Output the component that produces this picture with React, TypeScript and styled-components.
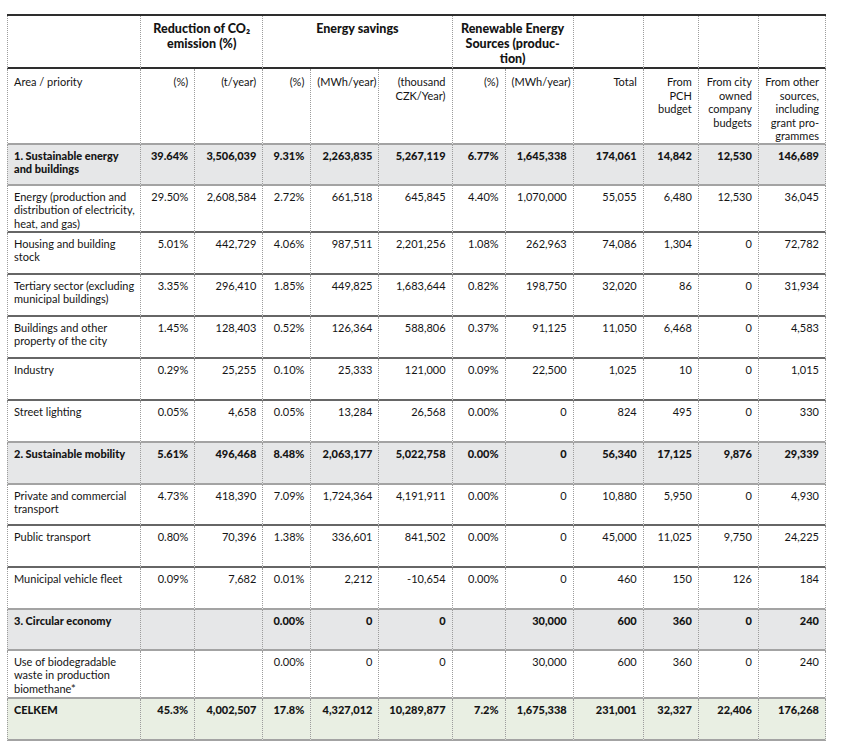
import styled, { createGlobalStyle } from 'styled-components';

const GlobalStyle = createGlobalStyle`
  html, body {
    margin: 0;
    padding: 0;
    background: #ffffff;
  }

  body {
    font-family: Lato, 'Liberation Sans', sans-serif;
    color: #141414;
  }
`;

type Kind = 'item' | 'section' | 'total';

type Row = {
  kind: Kind;
  label: string[];
  values: string[];
  height: number;
};

const colWidths = [133, 54, 68, 48, 68, 73, 53, 68, 70, 55, 60, 68];

const subHeaders: { lines: string[]; align: 'left' | 'right' }[] = [
  { lines: ['Area / priority'], align: 'left' },
  { lines: ['(%)'], align: 'right' },
  { lines: ['(t/year)'], align: 'right' },
  { lines: ['(%)'], align: 'right' },
  { lines: ['(MWh/year)'], align: 'right' },
  { lines: ['(thousand', 'CZK/Year)'], align: 'right' },
  { lines: ['(%)'], align: 'right' },
  { lines: ['(MWh/year)'], align: 'right' },
  { lines: ['Total'], align: 'right' },
  { lines: ['From', 'PCH', 'budget'], align: 'right' },
  { lines: ['From city', 'owned', 'company', 'budgets'], align: 'right' },
  { lines: ['From other', 'sources,', 'including', 'grant pro-', 'grammes'], align: 'right' },
];

const rows: Row[] = [
  {
    kind: 'section',
    label: ['1. Sustainable energy', 'and buildings'],
    values: ['39.64%', '3,506,039', '9.31%', '2,263,835', '5,267,119', '6.77%', '1,645,338', '174,061', '14,842', '12,530', '146,689'],
    height: 41,
  },
  {
    kind: 'item',
    label: ['Energy (production and', 'distribution of electricity,', 'heat, and gas)'],
    values: ['29.50%', '2,608,584', '2.72%', '661,518', '645,845', '4.40%', '1,070,000', '55,055', '6,480', '12,530', '36,045'],
    height: 47,
  },
  {
    kind: 'item',
    label: ['Housing and building', 'stock'],
    values: ['5.01%', '442,729', '4.06%', '987,511', '2,201,256', '1.08%', '262,963', '74,086', '1,304', '0', '72,782'],
    height: 42,
  },
  {
    kind: 'item',
    label: ['Tertiary sector (excluding', 'municipal buildings)'],
    values: ['3.35%', '296,410', '1.85%', '449,825', '1,683,644', '0.82%', '198,750', '32,020', '86', '0', '31,934'],
    height: 42,
  },
  {
    kind: 'item',
    label: ['Buildings and other', 'property of the city'],
    values: ['1.45%', '128,403', '0.52%', '126,364', '588,806', '0.37%', '91,125', '11,050', '6,468', '0', '4,583'],
    height: 42,
  },
  {
    kind: 'item',
    label: ['Industry'],
    values: ['0.29%', '25,255', '0.10%', '25,333', '121,000', '0.09%', '22,500', '1,025', '10', '0', '1,015'],
    height: 42,
  },
  {
    kind: 'item',
    label: ['Street lighting'],
    values: ['0.05%', '4,658', '0.05%', '13,284', '26,568', '0.00%', '0', '824', '495', '0', '330'],
    height: 42,
  },
  {
    kind: 'section',
    label: ['2. Sustainable mobility'],
    values: ['5.61%', '496,468', '8.48%', '2,063,177', '5,022,758', '0.00%', '0', '56,340', '17,125', '9,876', '29,339'],
    height: 42,
  },
  {
    kind: 'item',
    label: ['Private and commercial', 'transport'],
    values: ['4.73%', '418,390', '7.09%', '1,724,364', '4,191,911', '0.00%', '0', '10,880', '5,950', '0', '4,930'],
    height: 41,
  },
  {
    kind: 'item',
    label: ['Public transport'],
    values: ['0.80%', '70,396', '1.38%', '336,601', '841,502', '0.00%', '0', '45,000', '11,025', '9,750', '24,225'],
    height: 42,
  },
  {
    kind: 'item',
    label: ['Municipal vehicle fleet'],
    values: ['0.09%', '7,682', '0.01%', '2,212', '-10,654', '0.00%', '0', '460', '150', '126', '184'],
    height: 42,
  },
  {
    kind: 'section',
    label: ['3. Circular economy'],
    values: ['', '', '0.00%', '0', '0', '', '30,000', '600', '360', '0', '240'],
    height: 41,
  },
  {
    kind: 'item',
    label: ['Use of biodegradable', 'waste in production', 'biomethane*'],
    values: ['', '', '0.00%', '0', '0', '', '30,000', '600', '360', '0', '240'],
    height: 48,
  },
  {
    kind: 'total',
    label: ['CELKEM'],
    values: ['45.3%', '4,002,507', '17.8%', '4,327,012', '10,289,877', '7.2%', '1,675,338', '231,001', '32,327', '22,406', '176,268'],
    height: 42,
  },
];

const backgrounds: Record<Kind, string> = {
  item: '#ffffff',
  section: '#e6e7e8',
  total: '#e9efe3',
};

const Lines = ({ lines }: { lines: string[] }) => (
  <>
    {lines.map((line, index) => (
      <span key={line + index}>
        {line}
        {index < lines.length - 1 && <br />}
      </span>
    ))}
  </>
);

function App() {
  return (
    <>
      <GlobalStyle />
      <StyledPage>
        <StyledTable>
          <colgroup>
            {colWidths.map((w, i) => (
              <col key={i} style={{ width: w }} />
            ))}
          </colgroup>
          <thead>
            <StyledTopRow>
              <StyledGroupCell />
              <StyledGroupCell colSpan={2}>
                Reduction of CO₂
                <br />
                emission (%)
              </StyledGroupCell>
              <StyledGroupCell colSpan={3}>Energy savings</StyledGroupCell>
              <StyledGroupCell colSpan={2}>
                Renewable Energy
                <br />
                Sources (produc-
                <br />
                tion)
              </StyledGroupCell>
              <StyledGroupCell />
              <StyledGroupCell />
              <StyledGroupCell />
              <StyledGroupCell />
            </StyledTopRow>
            <StyledSubRow>
              {subHeaders.map((h, i) => (
                <StyledSubCell key={i} $align={h.align}>
                  <Lines lines={h.lines} />
                </StyledSubCell>
              ))}
            </StyledSubRow>
          </thead>
          <tbody>
            {rows.map((row, r) => {
              const next = rows[r + 1];
              const lightLine = row.kind !== 'item' || !next || next.kind !== 'item';
              return (
                <StyledBodyRow key={row.label[0]} $height={row.height} $bg={backgrounds[row.kind]}>
                  <StyledCell $align='left' $bold={row.kind !== 'item'} $light={lightLine}>
                    <Lines lines={row.label} />
                  </StyledCell>
                  {row.values.map((v, i) => (
                    <StyledCell key={i} $align='right' $bold={row.kind !== 'item'} $light={lightLine}>
                      {v}
                    </StyledCell>
                  ))}
                </StyledBodyRow>
              );
            })}
          </tbody>
        </StyledTable>
      </StyledPage>
    </>
  );
}

export default App;

const StyledPage = styled.div`
  padding: 14px 0 0 7px;
`;

const StyledTable = styled.table`
  table-layout: fixed;
  width: 819px;
  border-collapse: separate;
  border-spacing: 0;
  border-top: 2px solid #2e2e2e;

  font-family: Lato, 'Liberation Sans', sans-serif;
  color: #141414;

  & td,
  & th {
    box-sizing: border-box;
    vertical-align: top;
    border-left: 1px dotted #9c9c9c;
  }

  & td:last-child,
  & th:last-child {
    border-right: 1px dotted #9c9c9c;
  }
`;

const StyledTopRow = styled.tr`
  height: 53px;
`;

const StyledGroupCell = styled.th`
  padding: 5px 6px 0;
  border-bottom: 2px solid #2e2e2e;

  font-size: 12.5px;
  font-weight: 900;
  line-height: 15px;
  text-align: center;
`;

const StyledSubRow = styled.tr`
  height: 74px;
`;

const StyledSubCell = styled.th<{ $align: 'left' | 'right' }>`
  padding: 6px 6px 0;
  border-bottom: 2px solid #a3a3a3;

  font-size: 11px;
  font-weight: 400;
  line-height: 13.5px;
  text-align: ${({ $align }) => $align};
  white-space: nowrap;
`;

const StyledBodyRow = styled.tr<{ $height: number; $bg: string }>`
  height: ${({ $height }) => $height}px;
  background: ${({ $bg }) => $bg};
`;

const StyledCell = styled.td<{ $align: 'left' | 'right'; $bold: boolean; $light: boolean }>`
  padding: 4px 6px 0;
  border-bottom: 2px solid ${({ $light }) => ($light ? '#a3a3a3' : '#666666')};

  font-size: 11px;
  font-weight: ${({ $bold }) => ($bold ? 900 : 400)};
  line-height: 13.5px;
  text-align: ${({ $align }) => $align};
  white-space: nowrap;
`;
